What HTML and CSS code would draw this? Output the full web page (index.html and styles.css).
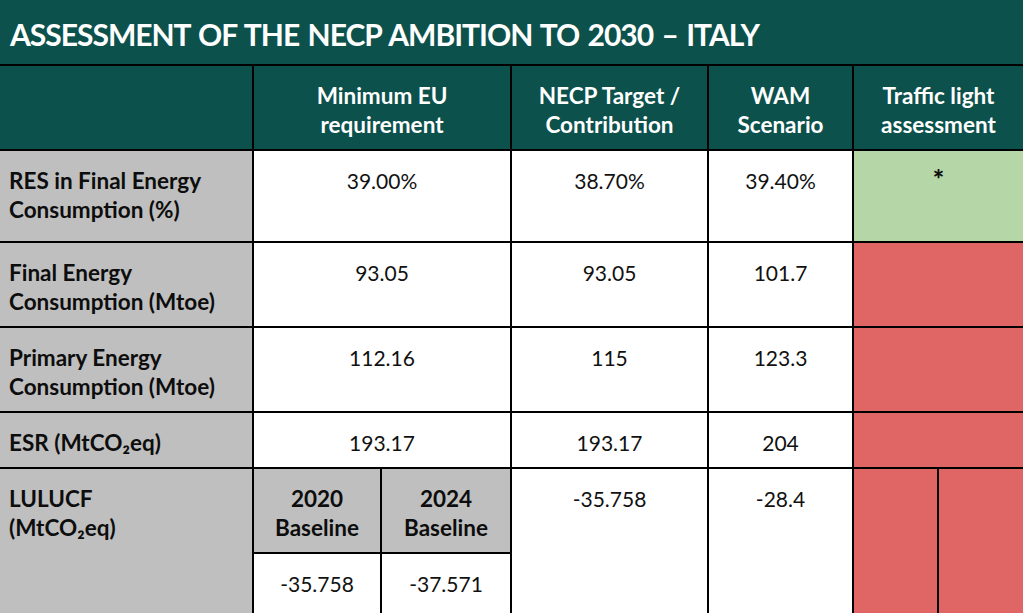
FILE: index.html
```html
<!DOCTYPE html>
<html lang="en">
<head>
<meta charset="utf-8">
<title>Assessment of the NECP ambition to 2030 – Italy</title>
<link rel="stylesheet" href="styles.css">
</head>
<body>
<div class="page">
  <h1 class="title">ASSESSMENT OF THE NECP AMBITION TO 2030 – ITALY</h1>
  <div class="table">
    <div class="cell head c-label"></div>
    <div class="cell head c-min">Minimum EU<br>requirement</div>
    <div class="cell head c-necp">NECP Target /<br>Contribution</div>
    <div class="cell head c-wam">WAM<br>Scenario</div>
    <div class="cell head c-tl">Traffic light<br>assessment</div>

    <div class="cell label c-label">RES in Final Energy<br>Consumption (%)</div>
    <div class="cell val c-min">39.00%</div>
    <div class="cell val c-necp">38.70%</div>
    <div class="cell val c-wam">39.40%</div>
    <div class="cell green c-tl"><span class="star">*</span></div>

    <div class="cell label c-label">Final Energy<br>Consumption (Mtoe)</div>
    <div class="cell val c-min">93.05</div>
    <div class="cell val c-necp">93.05</div>
    <div class="cell val c-wam">101.7</div>
    <div class="cell red c-tl"></div>

    <div class="cell label c-label">Primary Energy<br>Consumption (Mtoe)</div>
    <div class="cell val c-min">112.16</div>
    <div class="cell val c-necp">115</div>
    <div class="cell val c-wam">123.3</div>
    <div class="cell red c-tl"></div>

    <div class="cell label c-label">ESR (MtCO₂eq)</div>
    <div class="cell val c-min">193.17</div>
    <div class="cell val c-necp">193.17</div>
    <div class="cell val c-wam">204</div>
    <div class="cell red c-tl"></div>

    <div class="cell label c-label lul">LULUCF<br>(MtCO₂eq)</div>
    <div class="cell sub c-min1">2020<br>Baseline</div>
    <div class="cell sub c-min2">2024<br>Baseline</div>
    <div class="cell val c-necp lul">-35.758</div>
    <div class="cell val c-wam lul">-28.4</div>
    <div class="cell red c-tl1 lul"></div>
    <div class="cell red c-tl2 lul"></div>
    <div class="cell val c-min1">-35.758</div>
    <div class="cell val c-min2">-37.571</div>
  </div>
</div>
</body>
</html>
```

FILE: styles.css
```css
html, body {
  margin: 0;
  padding: 0;
  background: #ffffff;
}
body {
  width: 1023px;
  height: 613px;
  overflow: hidden;
  font-family: "Lato", "DejaVu Sans", sans-serif;
}
.page {
  width: 1023px;
}
.title {
  margin: 0;
  height: 64px;
  box-sizing: border-box;
  padding: 17px 0 0 10px;
  background: #0c514c;
  color: #ffffff;
  font-size: 30px;
  font-weight: 700;
  line-height: 34px;
  letter-spacing: -1px;
  word-spacing: 2px;
  white-space: nowrap;
}
.table {
  display: grid;
  grid-template-columns: 252px 126px 128px 195px 143px 83px 84px;
  grid-template-rows: 83px 90px 83px 83px 54px 83px 60px;
  column-gap: 2px;
  row-gap: 2px;
  background: #000000;
  border-top: 2px solid #000000;
}
.cell {
  box-sizing: border-box;
  padding-top: 15px;
  font-size: 21px;
  line-height: 29px;
  color: #111111;
}
.head {
  background: #0c514c;
  color: #ffffff;
  font-weight: 700;
  font-size: 22.5px;
  text-align: center;
}
.label {
  background: #bfbfbf;
  font-weight: 700;
  font-size: 22.5px;
  padding-left: 9px;
  color: #0d0d0d;
}
.val {
  background: #ffffff;
  text-align: center;
}
.sub {
  background: #bfbfbf;
  font-weight: 700;
  font-size: 22.5px;
  text-align: center;
  color: #0d0d0d;
}
.green { background: #b5d6a7; text-align: center; }
.red { background: #e06666; }
.star { font-weight: 900; font-size: 27px; line-height: 24px; }

.c-label { grid-column: 1; }
.c-min { grid-column: 2 / 4; }
.c-min1 { grid-column: 2; }
.c-min2 { grid-column: 3; }
.c-necp { grid-column: 4; }
.c-wam { grid-column: 5; }
.c-tl { grid-column: 6 / 8; }
.c-tl1 { grid-column: 6; }
.c-tl2 { grid-column: 7; }
.lul { grid-row: 6 / 8; }
```
